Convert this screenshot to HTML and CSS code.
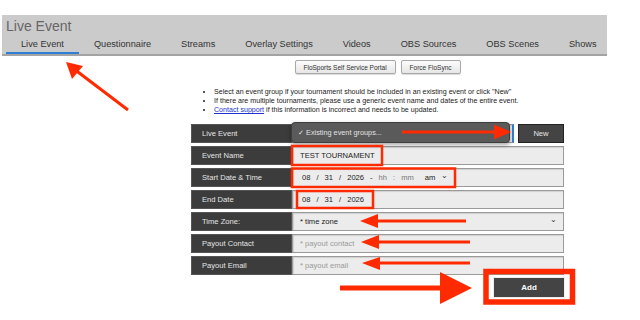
FILE: index.html
```html
<!DOCTYPE html>
<html lang="en">
<head>
    <meta charset="UTF-8">
    <meta name="viewport" content="width=device-width, initial-scale=1.0">
    <title>Live Event</title>
    <link rel="stylesheet" href="styles.css">
</head>
<body>
    <div class="topbar">
        <div class="page-title">Live Event</div>
        <nav class="tabs">
            <a class="tab active">Live Event</a>
            <a class="tab">Questionnaire</a>
            <a class="tab">Streams</a>
            <a class="tab">Overlay Settings</a>
            <a class="tab">Videos</a>
            <a class="tab">OBS Sources</a>
            <a class="tab">OBS Scenes</a>
            <a class="tab">Shows</a>
        </nav>
    </div>

    <div class="content">
        <div class="actions">
            <button class="btn-light">FloSports Self Service Portal</button>
            <button class="btn-light">Force FloSync</button>
        </div>

        <ul class="notes">
            <li>Select an event group if your tournament should be included in an existing event or click "New"</li>
            <li>If there are multiple tournaments, please use a generic event name and dates of the entire event.</li>
            <li><a href="#">Contact support</a> if this information is incorrect and needs to be updated.</li>
        </ul>

        <form class="event-form">
            <div class="row">
                <div class="label">Live Event</div>
                <div class="field focus"></div>
                <button type="button" class="btn-dark new">New</button>
            </div>
            <div class="row">
                <div class="label">Event Name</div>
                <div class="field">TEST TOURNAMENT</div>
            </div>
            <div class="row">
                <div class="label">Start Date &amp; Time</div>
                <div class="field date">
                    <span>08</span><span>/</span><span>31</span><span>/</span><span>2026</span><span>-</span>
                    <span class="muted">hh</span><span class="muted">:</span><span class="muted">mm</span>
                    <span class="ampm">am</span><span class="chev">&#8964;</span>
                </div>
            </div>
            <div class="row">
                <div class="label">End Date</div>
                <div class="field date">
                    <span>08</span><span>/</span><span>31</span><span>/</span><span>2026</span>
                </div>
            </div>
            <div class="row">
                <div class="label">Time Zone:</div>
                <div class="field select">* time zone<span class="chev">&#8964;</span></div>
            </div>
            <div class="row">
                <div class="label">Payout Contact</div>
                <div class="field placeholder">* payout contact</div>
            </div>
            <div class="row">
                <div class="label">Payout Email</div>
                <div class="field placeholder">* payout email</div>
            </div>

            <div class="dropdown">&#10003; Existing event groups...</div>
        </form>

        <div class="submit">
            <button type="button" class="btn-dark add">Add</button>
        </div>
    </div>

    <!-- red annotation marks drawn over the page -->
    <svg class="marks" width="640" height="320" viewBox="0 0 640 320">
        <g fill="none" stroke="#ff2a00">
            <rect x="292" y="146" width="90" height="19" stroke-width="2.5"/>
            <rect x="292" y="168.5" width="163" height="18.5" stroke-width="2.5"/>
            <rect x="297" y="191" width="76" height="17" stroke-width="2.5"/>
            <rect x="486" y="271.5" width="86.5" height="30.5" stroke-width="5.5"/>
            <line x1="128" y1="110" x2="74" y2="69" stroke-width="3"/>
            <line x1="402" y1="132" x2="496" y2="132" stroke-width="3"/>
            <line x1="376" y1="221" x2="466" y2="221" stroke-width="3"/>
            <line x1="377" y1="242" x2="470" y2="242" stroke-width="3"/>
            <line x1="378" y1="263" x2="470" y2="263" stroke-width="3"/>
            <line x1="340" y1="288" x2="444" y2="288" stroke-width="5"/>
        </g>
        <g fill="#ff2a00">
            <polygon points="66,62 83,66 72,79"/>
            <polygon points="511,132 494,124.5 494,139.5"/>
            <polygon points="360,221 378,214 378,228"/>
            <polygon points="361,242 379,235 379,249"/>
            <polygon points="362,263 380,257 380,270"/>
            <polygon points="472,288 440,272 440,304"/>
        </g>
    </svg>
</body>
</html>
```

FILE: styles.css
```css
body { margin: 0; font-family: "Liberation Sans", Arial, sans-serif; color: #222; background: #fff; position: relative; width: 640px; height: 320px; overflow: hidden; }

.topbar { margin: 15px 33px 0 2px; background: #cbcbcb; border-bottom: 2px solid #a3a3a3; }
.page-title { font-size: 14px; line-height: 18px; padding: 2px 0 0 4px; color: #666; }
.tabs { display: flex; padding-left: 4px; }
.tab { flex: none; white-space: nowrap; font-size: 9.2px; line-height: 15px; padding: 2px 15px 0; color: #333; border-bottom: 2px solid transparent; }
.tab.active { border-bottom-color: #2d7fd6; }

.content { width: 373px; margin-left: 191px; }
.actions { display: flex; justify-content: center; gap: 5px; margin-top: 4px; }
.btn-light { flex: none; white-space: nowrap; font-family: inherit; font-size: 6.5px; height: 14px; padding: 0 8px; color: #333; background: linear-gradient(#fcfcfc, #e6e6e6); border: 1px solid #a8a8a8; border-radius: 2px; box-shadow: 0 1px 1px rgba(0, 0, 0, 0.15); }

.notes { margin: 14px 0 0; padding-left: 23px; font-size: 7.1px; line-height: 9px; color: #222; white-space: nowrap; }
.notes a { color: #2233cc; text-decoration: underline; }

.event-form { position: relative; margin-top: 9px; }
.row { display: flex; height: 19px; margin-bottom: 3px; }
.label { width: 101px; flex: none; display: flex; align-items: center; padding-left: 10px; box-sizing: border-box; background: #3c3c3c; color: #e4e4e4; font-size: 7.6px; border: 1px solid #555; white-space: nowrap; }
.field { flex: 1; display: flex; align-items: center; padding-left: 7px; background: #ececec; border: 1px solid #9a9a9a; box-shadow: inset 1px 1px 1px rgba(0, 0, 0, 0.12); font-size: 7.6px; color: #222; white-space: nowrap; }
.field.focus { border-right: 2px solid #2d7fd6; }
.field.placeholder { color: #9a9a9a; }
.field.select { justify-content: space-between; padding-right: 6px; }
.date { gap: 6px; padding-left: 9px; }
.date .muted { color: #777; }
.date .ampm { margin-left: 5px; }
.chev { font-size: 8px; line-height: 8px; margin-top: -4px; color: #333; }

.btn-dark { font-family: inherit; background: #444; color: #e6e6e6; border: 1px solid #222; cursor: pointer; }
.new { width: 46px; flex: none; margin-left: 4px; font-size: 7.6px; }

.dropdown { position: absolute; left: 100px; top: -2px; width: 219px; height: 21px; box-sizing: border-box; padding-left: 6px; display: flex; align-items: center; background: #5a5a5a; border: 1px solid #3e3e3e; border-radius: 4px; box-shadow: 0 2px 4px rgba(0, 0, 0, 0.35); color: #e2e2e2; font-size: 7.3px; }

.submit { display: flex; justify-content: flex-end; margin-top: -1px; margin-right: -1px; }
.add { width: 72px; height: 21px; font-size: 8px; font-weight: bold; color: #fff; border: 1px solid #eee; }

.marks { position: absolute; top: 0; left: 0; pointer-events: none; }
```
